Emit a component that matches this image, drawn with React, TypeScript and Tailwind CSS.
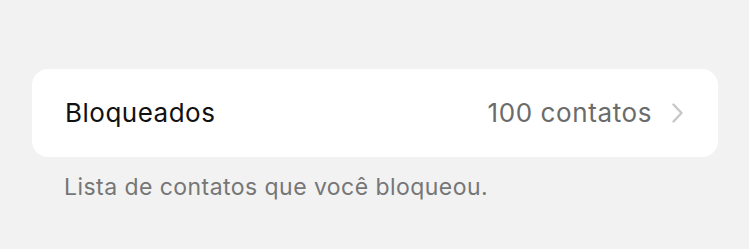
export default function App() {
  return (
    <div
      className="min-h-[249px] w-full bg-[#f2f2f2] pt-[69px] pl-[32px] pr-[31px]"
      style={{ fontFamily: "Inter, 'Noto Sans', sans-serif" }}
    >
      <div className="flex h-[88px] items-center justify-between rounded-[16px] bg-white pl-[33px] pr-[35px]">
        <span className="text-[26px] leading-none tracking-[0.5px] text-[#111111]">Bloqueados</span>
        <div className="flex items-center gap-[20px]">
          <span className="text-[26px] leading-none tracking-[0.6px] text-[#6b6b6b]">100 contatos</span>
          <svg width="11" height="20" viewBox="0 0 11 20" fill="none">
            <path
              d="M1.5 1.5l8 8.5-8 8.5"
              stroke="#c7c7c7"
              strokeWidth="2.4"
              strokeLinecap="round"
              strokeLinejoin="round"
            />
          </svg>
        </div>
      </div>
      <p className="mt-[19px] pl-[32px] text-[23px] leading-none tracking-[0.45px] text-[#767676]">
        Lista de contatos que você bloqueou.
      </p>
    </div>
  );
}
